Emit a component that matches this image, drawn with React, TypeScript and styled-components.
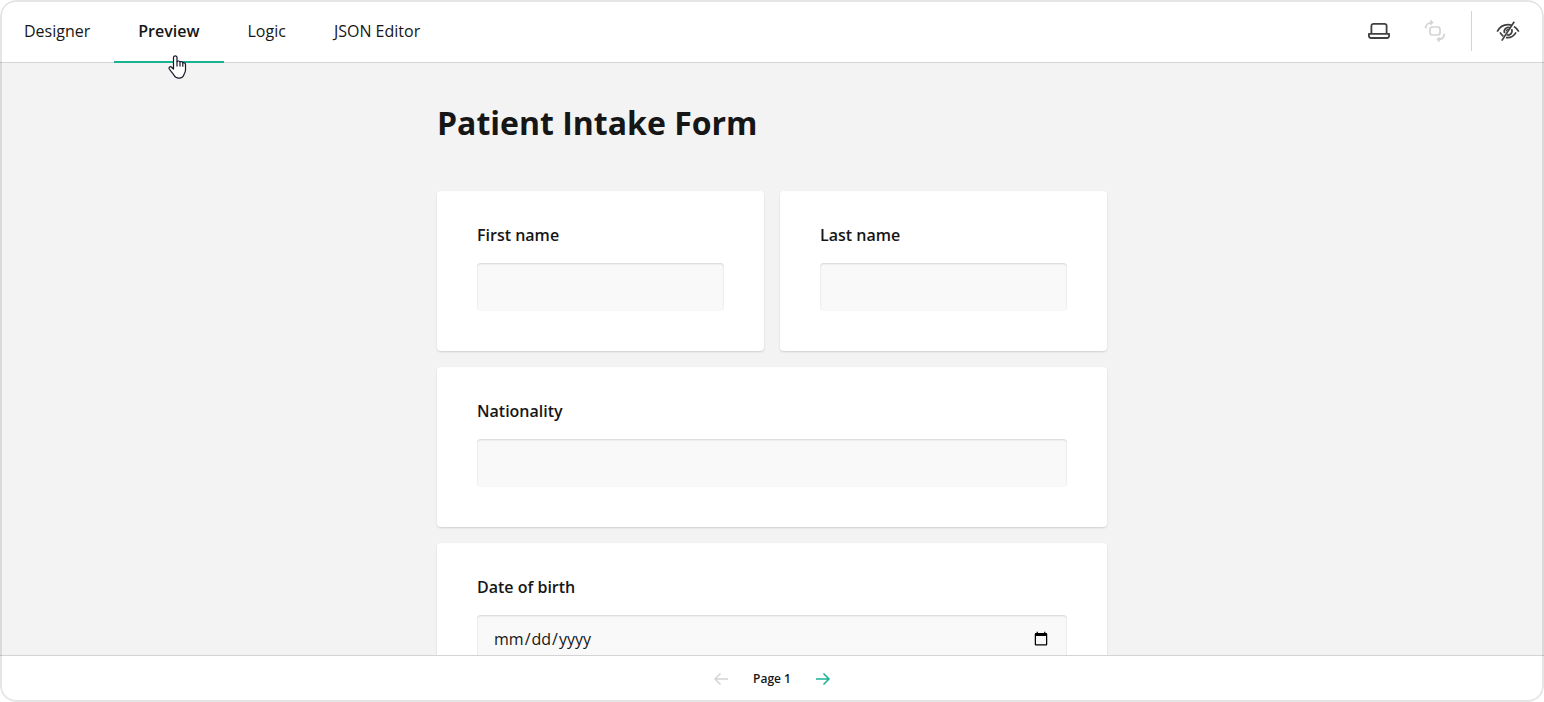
import React from "react";
import styled, { createGlobalStyle, css } from "styled-components";

const GlobalStyle = createGlobalStyle`
  *, *::before, *::after { box-sizing: border-box; }
  body {
    margin: 0;
    background: #fff;
    color: #161616;
    font-family: "Open Sans", "Noto Sans", sans-serif;
    font-size: 16px;
    line-height: 24px;
  }
`;

const Frame = styled.div`
  position: relative;
  display: flex;
  flex-direction: column;
  height: 100vh;
  border-radius: 16px;
  overflow: hidden;
  background: #fff;

  &::after {
    content: "";
    position: absolute;
    inset: 0;
    border: 2px solid rgba(0, 0, 0, 0.1);
    border-radius: 16px;
    pointer-events: none;
  }
`;

const Header = styled.header`
  display: flex;
  flex: none;
  justify-content: space-between;
  box-shadow: inset 0 -1px 0 #d4d4d4;
`;

const TabList = styled.nav`
  display: flex;
`;

const Tab = styled.button<{ $active?: boolean }>`
  position: relative;
  padding: 19px 24px 20px;
  border: 0;
  background: none;
  color: inherit;
  font: inherit;
  cursor: pointer;
  ${({ $active }) =>
    $active &&
    css`
      font-weight: 600;
      box-shadow: inset 0 -2px 0 #19b394;
    `}
`;

const Pointer = styled.svg`
  position: absolute;
  left: 54px;
  top: 54px;
  z-index: 1;
`;

const Toolbar = styled.div`
  display: flex;
  align-items: center;
  padding: 0 24px 1px 0;
  gap: 24px;
`;

const ToolGroup = styled.div`
  display: flex;
  gap: 32px;
`;

const IconButton = styled.button<{ $size?: number; $accent?: boolean }>`
  display: block;
  padding: 0;
  width: ${({ $size = 24 }) => $size}px;
  height: ${({ $size = 24 }) => $size}px;
  border: 0;
  background: none;
  color: ${({ $accent }) => ($accent ? "#19b394" : "#404040")};
  cursor: pointer;

  &:disabled {
    color: #d4d4d4;
    cursor: default;
  }

  svg {
    display: block;
    fill: none;
    stroke: currentColor;
  }
`;

const Divider = styled.span`
  width: 1px;
  height: 40px;
  background: #d4d4d4;
`;

const Content = styled.main`
  flex: 1;
  min-height: 0;
  overflow-y: auto;
  scrollbar-width: none;
  padding: 40px 24px;
  background: #f3f3f3;
`;

const Form = styled.form`
  max-width: 670px;
  margin: 0 auto;
`;

const Title = styled.h1`
  margin: 0 0 48px;
  font-size: 32px;
  line-height: 40px;
  font-weight: 700;
`;

const Questions = styled.div`
  display: grid;
  grid-template-columns: 1fr 1fr;
  gap: 16px;
`;

const Card = styled.div<{ $wide?: boolean }>`
  display: flex;
  flex-direction: column;
  gap: 16px;
  padding: 32px 40px 40px;
  border-radius: 4px;
  background: #fff;
  box-shadow: 0 1px 2px rgba(0, 0, 0, 0.15);
  ${({ $wide }) => $wide && "grid-column: 1 / -1;"}
`;

const Label = styled.label`
  font-weight: 600;
`;

const Input = styled.input`
  width: 100%;
  height: 48px;
  padding: 12px 16px;
  border: 0;
  border-radius: 4px;
  background: #f9f9f9;
  box-shadow: inset 0 1px 2px rgba(0, 0, 0, 0.15);
  color: inherit;
  font: inherit;
`;

const Footer = styled.footer`
  display: flex;
  flex: none;
  align-items: center;
  justify-content: center;
  gap: 24px;
  padding: 11px 0;
  border-top: 1px solid #d4d4d4;
`;

const PageLabel = styled.span`
  font-size: 12px;
  font-weight: 600;
`;

const LaptopIcon = () => (
  <svg width="24" height="24" viewBox="0 0 24 24" strokeWidth="1.8">
    <path d="M4.4 14.8V7a2.200 2.200 0 0 1 2.200-2.200h10.800A2.200 2.200 0 0 1 19.600 7v7.800" />
    <path d="M1.900 14.900h20.200v1.900a2.200 2.200 0 0 1-2.200 2.200H4.100a2.200 2.200 0 0 1-2.200-2.200z" strokeLinejoin="round" />
  </svg>
);

const RotateIcon = () => (
  <svg width="24" height="24" viewBox="0 0 24 24" strokeWidth="1.7">
    <rect x="7" y="8" width="10" height="8" rx="2.4" />
    <path d="M2.600 9.400C2.800 6 5 3.500 9.200 3.500M7.400 1.400l2 2.100-2 2.100" />
    <path d="M21.400 14.600c-.2 3.400-2.400 5.900-6.600 5.900M16.600 18.400l-2 2.100 2 2.100" />
  </svg>
);

const HiddenIcon = () => (
  <svg width="24" height="24" viewBox="0 0 24 24" strokeWidth="1.7">
    <path d="M1.200 12.600C3.400 8.200 7.200 5.600 12 5.600c1.400 0 2.600.2 3.800.6M18 7.400c2 1.200 3.600 3 4.800 5.200" />
    <path d="M4 13.400c.9 1.600 2 2.800 3.400 3.800M10 18.600c4.400.6 7.800-1.200 10-5.200" />
    <path d="M14 8.800A4 4 0 0 0 8.700 14.200M15.600 10.200a4 4 0 0 1-4.800 5.600" />
    <path d="M13 10.600a1.800 1.800 0 0 0-2.600 1.800" strokeWidth="1.2" />
    <path d="M18.200 2.800L5.800 21.600" />
  </svg>
);

const ArrowLeft = () => (
  <svg width="16" height="16" viewBox="0 0 16 16" strokeWidth="1.5">
    <path d="M15 8H2M7.5 2.5L2 8l5.500 5.500" />
  </svg>
);

const ArrowRight = () => (
  <svg width="16" height="16" viewBox="0 0 16 16" strokeWidth="1.5">
    <path d="M1 8h13M8.500 2.500L14 8l-5.500 5.500" />
  </svg>
);

const HandPointer = () => (
  <Pointer width="20" height="26" viewBox="0 0 20 26" aria-hidden="true">
    <path
      d="M5.500 15V3.200a1.800 1.800 0 0 1 3.500 0V7.600c.6-.9 2.600-.8 3 .5.8-.7 2.400-.4 2.800.8 1.300-.6 2.700.1 2.700 1.600V16c0 2-.8 3-1.500 4.500-.8 2.600-2.400 3.700-5 3.700-3 0-4.200-1.200-5.300-3.400C4.600 18.700 2.400 17 1.200 14.800c-.7-1.600 1.100-2.700 2.400-1.600z"
      fill="#fff"
      stroke="#17172b"
      strokeWidth="1.2"
      strokeLinejoin="round"
    />
    <path d="M9 7.600v5M12 8.200v4.400M14.800 9v3.800" fill="none" stroke="#17172b" strokeWidth="1.2" />
  </Pointer>
);

type Question = { id: string; label: string; type?: string; wide?: boolean };

const questions: Question[] = [
  { id: "first-name", label: "First name" },
  { id: "last-name", label: "Last name" },
  { id: "nationality", label: "Nationality", wide: true },
  { id: "birth-date", label: "Date of birth", type: "date", wide: true },
];

export default function App() {
  return (
    <>
      <GlobalStyle />
      <Frame>
        <Header>
          <TabList>
            <Tab>Designer</Tab>
            <Tab $active aria-current="page">
              Preview
              <HandPointer />
            </Tab>
            <Tab>Logic</Tab>
            <Tab>JSON Editor</Tab>
          </TabList>
          <Toolbar>
            <ToolGroup>
              <IconButton aria-label="Device">
                <LaptopIcon />
              </IconButton>
              <IconButton aria-label="Rotate" disabled>
                <RotateIcon />
              </IconButton>
            </ToolGroup>
            <Divider />
            <IconButton aria-label="Show invisible elements">
              <HiddenIcon />
            </IconButton>
          </Toolbar>
        </Header>
        <Content>
          <Form>
            <Title>Patient Intake Form</Title>
            <Questions>
              {questions.map(({ id, label, type = "text", wide }) => (
                <Card key={id} $wide={wide}>
                  <Label htmlFor={id}>{label}</Label>
                  <Input id={id} type={type} />
                </Card>
              ))}
            </Questions>
          </Form>
        </Content>
        <Footer>
          <IconButton $size={16} aria-label="Previous page" disabled>
            <ArrowLeft />
          </IconButton>
          <PageLabel>Page 1</PageLabel>
          <IconButton $size={16} $accent aria-label="Next page">
            <ArrowRight />
          </IconButton>
        </Footer>
      </Frame>
    </>
  );
}
